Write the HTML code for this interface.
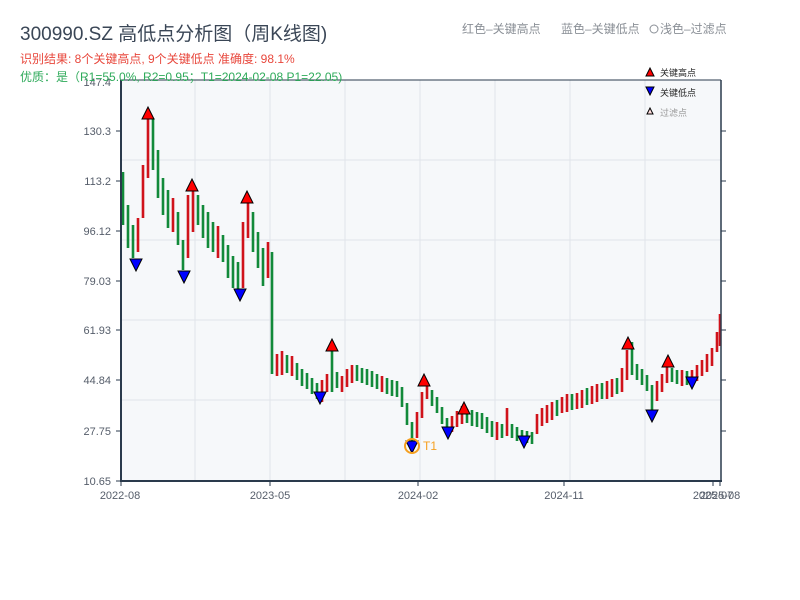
<!DOCTYPE html>
<html><head><meta charset="utf-8"><style>
body{margin:0;width:800px;height:600px;background:#fff;overflow:hidden;font-family:"Liberation Sans","Noto Sans CJK SC",sans-serif;}
</style></head><body>
<svg width="800" height="600" xmlns="http://www.w3.org/2000/svg" style="position:absolute;left:0;top:0;font-family:'Liberation Sans','Noto Sans CJK SC',sans-serif">
<rect x="121" y="80" width="600" height="401" fill="#f6f8fa"/>
<g stroke="#e0e4ea" stroke-width="1">
<line x1="195" y1="80" x2="195" y2="481"/><line x1="270" y1="80" x2="270" y2="481"/><line x1="345" y1="80" x2="345" y2="481"/><line x1="420" y1="80" x2="420" y2="481"/><line x1="495" y1="80" x2="495" y2="481"/><line x1="570" y1="80" x2="570" y2="481"/><line x1="645" y1="80" x2="645" y2="481"/>
<line x1="121" y1="160" x2="721" y2="160"/><line x1="121" y1="240" x2="721" y2="240"/><line x1="121" y1="320" x2="721" y2="320"/><line x1="121" y1="400" x2="721" y2="400"/>
</g>
<path stroke="#128a3a" stroke-width="2.6" fill="none" d="M123 172V225 M128 205V248 M133 225V258 M153 118V170 M158 150V198 M163 178V215 M168 190V228 M178 212V245 M183 240V270 M198 195V225 M203 205V238 M208 212V248 M213 222V252 M223 235V262 M228 245V278 M233 256V288 M238 262V292 M253 212V252 M258 232V268 M263 248V286 M272 252V374 M287 355V373 M297 363V380 M302 369V386 M307 373V389 M312 378V394 M317 383V399 M332 345V392 M337 372V388 M357 365V381 M362 368V383 M367 369V385 M372 371V387 M377 374V389 M387 378V394 M392 380V396 M397 381V397 M402 387V407 M407 403V425 M412 422V445 M432 390V406 M437 397V413 M442 407V424 M447 418V434 M467 409V423 M472 410V426 M477 412V427 M482 413V429 M487 417V433 M492 421V437 M502 424V438 M512 424V438 M517 427V441 M522 430V442 M527 431V443 M532 432V444 M557 400V416 M572 394V410 M587 388V405 M602 383V399 M617 378V394 M632 342V375 M637 364V380 M642 369V385 M647 375V391 M652 385V412 M672 368V382 M677 370V384 M687 371V385"/>
<path stroke="#d0131b" stroke-width="2.6" fill="none" d="M138 218V252 M143 165V218 M148 118V178 M173 198V232 M188 195V258 M193 185V232 M218 226V258 M243 222V288 M248 198V238 M268 242V278 M277 354V376 M282 351V375 M292 356V376 M322 380V402 M327 374V392 M342 376V392 M347 369V387 M352 365V383 M382 376V392 M417 412V438 M422 392V418 M427 383V399 M452 416V432 M457 411V427 M462 406V424 M497 422V440 M507 408V436 M537 414V434 M542 408V426 M547 405V423 M552 402V420 M562 397V413 M567 394V412 M577 393V409 M582 390V408 M592 386V404 M597 384V402 M607 381V399 M612 379V397 M622 368V392 M627 350V380 M657 381V401 M662 374V392 M667 365V383 M682 370V386 M692 370V386 M697 365V381 M702 360V376 M707 354V372 M712 348V366 M717 332V352 M720 314V346"/>
<g stroke="#2a3a4c" stroke-width="2"><line x1="121" y1="80" x2="121" y2="482"/><line x1="120" y1="481" x2="722" y2="481"/><line x1="121" y1="80" x2="721" y2="80" stroke-width="1"/><line x1="721" y1="80" x2="721" y2="481" stroke-width="1.5"/></g>
<g stroke="#2a3a4c" stroke-width="1">
<line x1="116" y1="131" x2="121" y2="131"/><line x1="116" y1="181" x2="121" y2="181"/><line x1="116" y1="231" x2="121" y2="231"/><line x1="116" y1="281" x2="121" y2="281"/><line x1="116" y1="330" x2="121" y2="330"/><line x1="116" y1="380" x2="121" y2="380"/><line x1="116" y1="431" x2="121" y2="431"/><line x1="116" y1="481" x2="121" y2="481"/>
<line x1="721" y1="131" x2="726" y2="131"/><line x1="721" y1="181" x2="726" y2="181"/><line x1="721" y1="231" x2="726" y2="231"/><line x1="721" y1="281" x2="726" y2="281"/><line x1="721" y1="330" x2="726" y2="330"/><line x1="721" y1="380" x2="726" y2="380"/><line x1="721" y1="431" x2="726" y2="431"/>
<line x1="121" y1="481" x2="121" y2="486"/><line x1="270" y1="481" x2="270" y2="486"/><line x1="418" y1="481" x2="418" y2="486"/><line x1="564" y1="481" x2="564" y2="486"/><line x1="713" y1="481" x2="713" y2="486"/><line x1="720" y1="481" x2="720" y2="486"/>
</g>
<g font-size="11" fill="#555d6a" text-anchor="end">
<text x="111" y="86">147.4</text><text x="111" y="135">130.3</text><text x="111" y="185">113.2</text><text x="111" y="235">96.12</text><text x="111" y="285">79.03</text><text x="111" y="334">61.93</text><text x="111" y="384">44.84</text><text x="111" y="435">27.75</text><text x="111" y="485">10.65</text>
</g>
<g font-size="11" fill="#555d6a" text-anchor="middle">
<text x="120" y="499">2022-08</text><text x="270" y="499">2023-05</text><text x="418" y="499">2024-02</text><text x="564" y="499">2024-11</text><text x="713" y="499">2025-07</text><text x="720" y="499">2025-08</text>
</g>
<g stroke="#000" stroke-width="1">
<g fill="#f00">
<polygon points="142,119 154,119 148,107"/><polygon points="186,191 198,191 192,179"/><polygon points="241,203 253,203 247,191"/><polygon points="326,351 338,351 332,339"/><polygon points="418,386 430,386 424,374"/><polygon points="458,414 470,414 464,402"/><polygon points="622,349 634,349 628,337"/><polygon points="662,367 674,367 668,355"/>
</g>
<g fill="#00f">
<polygon points="130,259 142,259 136,271"/><polygon points="178,271 190,271 184,283"/><polygon points="234,289 246,289 240,301"/><polygon points="314,392 326,392 320,404"/><polygon points="406,441 418,441 412,453"/><polygon points="442,427 454,427 448,439"/><polygon points="518,436 530,436 524,448"/><polygon points="646,410 658,410 652,422"/><polygon points="686,377 698,377 692,389"/>
</g>
</g>
<circle cx="412" cy="446" r="7" fill="none" stroke="#f5a020" stroke-width="2"/>
<text x="423" y="450" font-size="12" fill="#f5a020">T1</text>
<text x="20" y="40" font-size="19" fill="#3a4656">300990.SZ 高低点分析图（周K线图)</text>
<text x="20" y="63" font-size="12" fill="#e8473c">识别结果: 8个关键高点, 9个关键低点  准确度: 98.1%</text>
<text x="20" y="81" font-size="12" fill="#2eaa5a">优质：是（R1=55.0%, R2=0.95；T1=2024-02-08 P1=22.05)</text>
<text x="462" y="33" font-size="12" fill="#8a8f96">红色–关键高点</text>
<text x="561" y="33" font-size="12" fill="#8a8f96">蓝色–关键低点</text>
<circle cx="654" cy="29" r="4" fill="none" stroke="#8a8f96"/>
<text x="660" y="33" font-size="12" fill="#8a8f96">浅色–过滤点</text>
<polygon points="646,76 654,76 650,68" fill="#f00" stroke="#000"/>
<text x="660" y="76" font-size="9" fill="#222">关键高点</text>
<polygon points="646,87 654,87 650,95" fill="#00f" stroke="#000"/>
<text x="660" y="96" font-size="9" fill="#222">关键低点</text>
<polygon points="647,114 653,114 650,108" fill="#fdd" stroke="#000"/>
<text x="660" y="116" font-size="9" fill="#999">过滤点</text>
</svg>
</body></html>
